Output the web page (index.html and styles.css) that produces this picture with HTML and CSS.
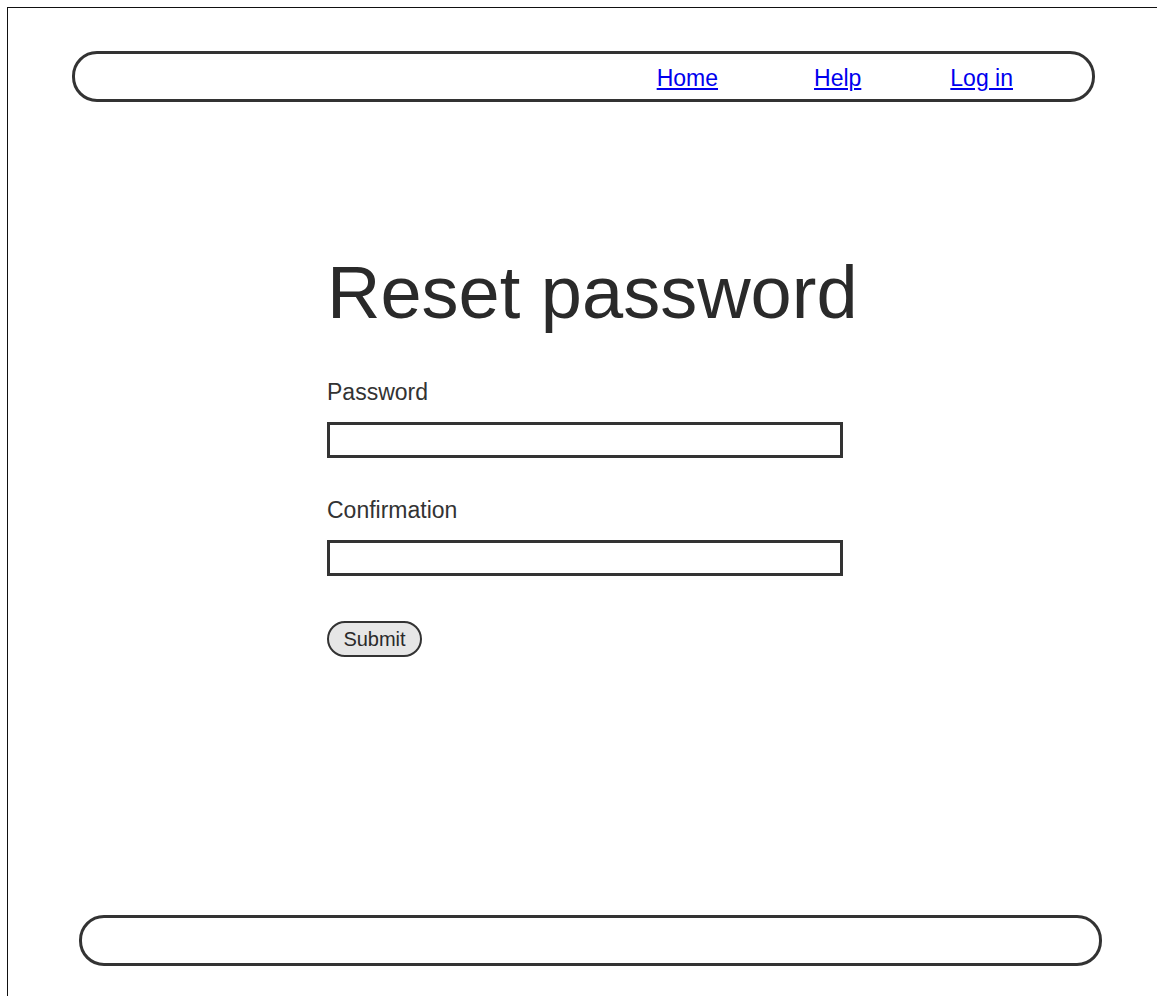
FILE: index.html
```html
<!DOCTYPE html>
<html lang="en">
<head>
<meta charset="utf-8">
<title>Reset password</title>
<link rel="stylesheet" href="styles.css">
</head>
<body>
<div class="frame">
  <header class="topbar">
    <nav class="nav">
      <a href="#" class="nav-link nav-home">Home</a>
      <a href="#" class="nav-link nav-help">Help</a>
      <a href="#" class="nav-link">Log in</a>
    </nav>
  </header>

  <main class="content">
    <h1 class="title">Reset password</h1>
    <form class="reset-form">
      <label class="field-label" for="password">Password</label>
      <input class="field-input" type="password" id="password">
      <label class="field-label field-label-next" for="confirmation">Confirmation</label>
      <input class="field-input" type="password" id="confirmation">
      <button class="submit" type="submit">Submit</button>
    </form>
  </main>

  <footer class="bottombar"></footer>
</div>
</body>
</html>
```

FILE: styles.css
```css
html, body {
  margin: 0;
  padding: 0;
  background: #fff;
}

body {
  padding: 7px 0 0 7px;
  font-family: "Liberation Sans", Arial, sans-serif;
  color: #333;
}

.frame {
  border-top: 1px solid #111;
  border-left: 1px solid #111;
  min-height: 1000px;
}

/* Rounded header bar */
.topbar {
  box-sizing: border-box;
  width: 1023px;
  height: 51px;
  margin: 43px 0 0 64px;
  border: 3px solid #333;
  border-radius: 25px;
  display: flex;
  align-items: center;
  justify-content: flex-end;
  padding: 3px 79px 0 0;
}

.nav {
  display: flex;
  align-items: center;
}

.nav-link {
  font-size: 23px;
  line-height: 23px;
  color: #0000ee;
  text-decoration: underline;
  text-underline-offset: 2px;
}

.nav-home {
  margin-right: 96px;
}

.nav-help {
  margin-right: 89px;
}

/* Main form column */
.content {
  margin-left: 319px;
}

.title {
  margin: 154px 0 0 0;
  font-size: 74px;
  line-height: 74px;
  font-weight: normal;
  color: #2a2a2a;
}

.reset-form {
  display: flex;
  flex-direction: column;
  align-items: flex-start;
  margin-top: 51px;
}

.field-label {
  font-size: 23px;
  line-height: 23px;
  color: #333;
  margin-bottom: 18px;
}

.field-label-next {
  margin-top: 41px;
}

.field-input {
  box-sizing: border-box;
  width: 516px;
  height: 36px;
  margin: 0;
  border: 3px solid #333;
  border-radius: 0;
  background: #fff;
  padding: 0 6px;
  font: 20px "Liberation Sans", Arial, sans-serif;
}

.submit {
  box-sizing: border-box;
  margin-top: 45px;
  width: 95px;
  height: 36px;
  padding: 0;
  border: 2px solid #333;
  border-radius: 18px;
  background: #e6e6e6;
  color: #2a2a2a;
  font: 20px/1 "Liberation Sans", Arial, sans-serif;
}

/* Rounded footer bar */
.bottombar {
  box-sizing: border-box;
  width: 1023px;
  height: 51px;
  margin: 258px 0 0 71px;
  border: 3px solid #333;
  border-radius: 25px;
}
```
